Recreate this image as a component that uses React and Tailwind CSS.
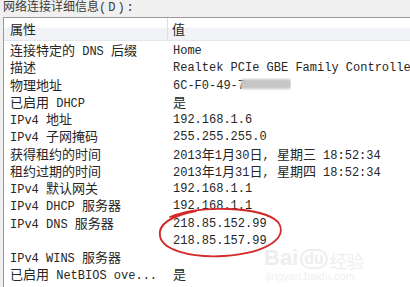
import React from "react";

function T({ s }) {
  const parts = s.split(/([\u3000-\u9fff\uff00-\uffef]+)/);
  return (
    <>
      {parts.map((p, i) =>
        /[\u3000-\u9fff\uff00-\uffef]/.test(p) ? (
          <span key={i} className="text-[13px] leading-none font-['Noto_Sans_CJK_SC',sans-serif]">
            {p}
          </span>
        ) : (
          <span key={i} className="whitespace-pre">{p}</span>
        )
      )}
    </>
  );
}

const rows = [
  ["连接特定的 DNS 后缀", "Home"],
  ["描述", "Realtek PCIe GBE Family Controller"],
  ["物理地址", "MAC"],
  ["已启用 DHCP", "是"],
  ["IPv4 地址", "192.168.1.6"],
  ["IPv4 子网掩码", "255.255.255.0"],
  ["获得租约的时间", "2013年1月30日, 星期三 18:52:34"],
  ["租约过期的时间", "2013年1月31日, 星期四 18:52:34"],
  ["IPv4 默认网关", "192.168.1.1"],
  ["IPv4 DHCP 服务器", "192.168.1.1"],
  ["IPv4 DNS 服务器", "218.85.152.99"],
  ["", "218.85.157.99"],
  ["IPv4 WINS 服务器", ""],
  ["已启用 NetBIOS ove...", "是"],
];

export default function App() {
  return (
    <div className="relative w-[410px] h-[287px] overflow-hidden bg-[#f0f0f0] flex flex-col font-['Liberation_Mono','Noto_Sans_CJK_SC',monospace] text-[12px] text-[#262626]">
      <div className="h-[17px] shrink-0 pl-[3px] leading-[15px] whitespace-nowrap text-[#3a3a3a]">
        <span className="text-[12px] leading-none font-['Noto_Sans_CJK_SC',sans-serif]">网络连接详细信息</span>
        <span className="text-[12px] tracking-[2px] font-['Liberation_Mono',monospace]">(D):</span>
      </div>
      <div className="ml-[3px] flex-1 bg-white border-l border-t border-[#9a9a9a] flex flex-col">
        <div className="h-[23px] shrink-0 flex border-b border-[#e4e6ea] bg-[linear-gradient(to_bottom,#ffffff_0%,#ffffff_42%,#f1f3f6_46%,#f1f3f6_100%)]">
          <div className="w-[164px] pl-[6px] pt-[4px] leading-[17px] border-r border-[#dde0e4]">
            <T s="属性" />
          </div>
          <div className="pl-[4px] pt-[4px] leading-[17px]">
            <T s="值" />
          </div>
        </div>
        <div className="pt-[2px] flex flex-col">
          {rows.map(([a, b], i) => (
            <div key={i} className="h-[17.25px] flex leading-[17px] whitespace-nowrap">
              <div className="w-[169px] pl-[6px] shrink-0">
                <T s={a} />
              </div>
              <div className="overflow-hidden">
                {b === "MAC" ? (
                  <>
                    <T s="6C-F0-49-7" />
                    <span className="inline-block align-middle w-[50px] h-[10px] -ml-[4px] -mt-[2px] bg-[#c6c6c6] blur-[1px] rounded-[2px]" />
                  </>
                ) : (
                  <T s={b} />
                )}
              </div>
            </div>
          ))}
        </div>
      </div>

      <svg className="absolute left-0 top-0 pointer-events-none" width="410" height="287" viewBox="0 0 410 287">
        <path
          d="M 170 217 C 198 205, 262 206, 278 222 C 289 237, 268 253, 224 256 C 188 258, 162 249, 160 236 C 158 225, 170 216, 196 211"
          fill="none"
          stroke="#d42a2a"
          strokeWidth="1.8"
          strokeLinecap="round"
        />
      </svg>

      <div className="absolute left-[264px] top-[247px] flex items-end gap-[2px] text-[#eeeeee] pointer-events-none">
        <span className="text-[22px] leading-none font-bold font-['Liberation_Sans',sans-serif]">Bai</span>
        <span className="text-[16px] leading-none font-bold font-['Liberation_Sans',sans-serif] border-2 border-[#eeeeee] rounded-full px-[2px]">du</span>
        <span className="text-[17px] leading-none font-['Noto_Sans_CJK_SC',sans-serif]">经验</span>
      </div>
      <div className="absolute left-[266px] top-[271px] text-[11px] leading-none text-[#f0f0f0] font-['Liberation_Sans',sans-serif] pointer-events-none">
        jingyan.baidu.com
      </div>
    </div>
  );
}
